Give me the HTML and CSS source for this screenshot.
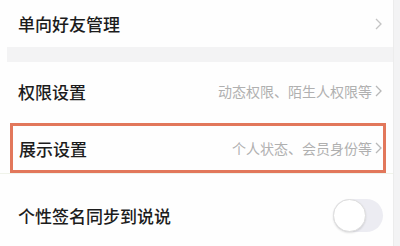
FILE: index.html
```html
<!DOCTYPE html>
<html lang="zh">
<head>
<meta charset="utf-8">
<link rel="stylesheet" href="styles.css">
</head>
<body>
<div class="page">
  <div class="main">
    <div class="row row-first">
      <span class="label">单向好友管理</span>
      <span class="right"><svg class="chev" viewBox="0 0 7 12" width="7" height="12"><path d="M1 1 L6 6 L1 11" fill="none" stroke="#c4c4c4" stroke-width="1.3"/></svg></span>
    </div>
    <div class="band"></div>
    <div class="row row-second">
      <span class="label">权限设置</span>
      <span class="right"><span class="sub">动态权限、陌生人权限等</span><svg class="chev" viewBox="0 0 7 12" width="7" height="12"><path d="M1 1 L6 6 L1 11" fill="none" stroke="#b8b8b8" stroke-width="1.3"/></svg></span>
    </div>
    <div class="hl-wrap">
      <div class="row hl">
        <span class="label">展示设置</span>
        <span class="right"><span class="sub">个人状态、会员身份等</span><svg class="chev" viewBox="0 0 7 12" width="7" height="12"><path d="M1 1 L6 6 L1 11" fill="none" stroke="#b8b8b8" stroke-width="1.3"/></svg></span>
      </div>
    </div>
    <div class="row row-last">
      <span class="label">个性签名同步到说说</span>
      <span class="toggle"><span class="knob"></span></span>
    </div>
  </div>
  <div class="edge"></div>
</div>
</body>
</html>
```
FILE: styles.css
```css
html, body {
  margin: 0;
  padding: 0;
  background: #fdfdfd;
  font-family: "Noto Sans CJK SC", "Noto Sans", sans-serif;
}
.page {
  display: flex;
  width: 400px;
  height: 246px;
  overflow: hidden;
}
.main {
  width: 393px;
  display: flex;
  flex-direction: column;
  background: #fefefe;
}
.edge {
  width: 7px;
  background: #f3f3f4;
  border-left: 1px solid #ececec;
  box-sizing: border-box;
}
.row {
  display: flex;
  align-items: center;
  justify-content: space-between;
  padding: 0 11px 0 18px;
  box-sizing: border-box;
  flex-shrink: 0;
}
.label {
  font-size: 17px;
  font-weight: 500;
  color: #1c1c1c;
  line-height: 1;
}
.right {
  display: flex;
  align-items: center;
  gap: 3px;
}
.sub {
  font-size: 14px;
  color: #b0b0b0;
  line-height: 1;
}
.chev {
  display: block;
}
.row-first {
  height: 47px;
}
.band {
  height: 15px;
  margin: 0 0 0 7px;
  background: #f3f3f4;
  flex-shrink: 0;
}
.row-second {
  height: 58px;
}
.hl-wrap {
  padding: 3px 7px 0 10px;
  flex-shrink: 0;
}
.hl {
  height: 50px;
  border: 3px solid #e2775b;
  padding: 0 1px 0 6px;
  background: #fefefe;
}
.row-last {
  height: 84px;
  border-top: 1px solid #f0f3ea;
  padding-right: 10px;
}
.toggle {
  width: 50px;
  height: 33px;
  border-radius: 17px;
  background: #ececf2;
  position: relative;
  display: block;
}
.knob {
  position: absolute;
  left: 0;
  top: 0;
  width: 31px;
  height: 31px;
  border-radius: 50%;
  background: #ffffff;
  border: 1px solid #dedede;
  box-shadow: 0 1px 2px rgba(0,0,0,0.12);
}
```
